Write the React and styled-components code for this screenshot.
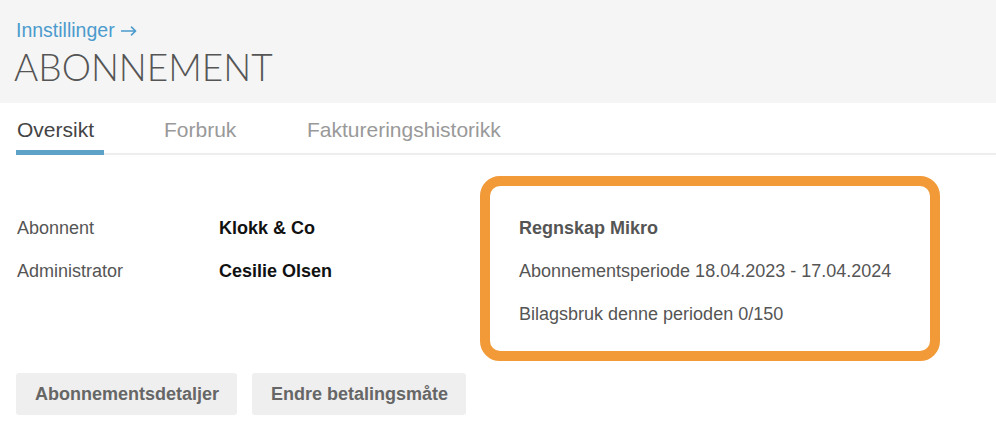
import React from "react";
import styled, { createGlobalStyle } from "styled-components";

const Global = createGlobalStyle`
  html, body { margin: 0; padding: 0; background: #fff; }
  body { font-family: "Liberation Sans", Arial, sans-serif; }
`;

const Page = styled.div`
  width: 996px;
  height: 434px;
  overflow: hidden;
  background: #fff;
`;

const Header = styled.header`
  background: #f5f5f5;
  height: 103px;
  padding: 19px 0 0 16px;
  box-sizing: border-box;
`;

const Crumb = styled.a`
  display: flex;
  align-items: center;
  gap: 6px;
  color: #4b9bcd;
  font-size: 19.5px;
  line-height: 22px;
  text-decoration: none;
`;

const Arrow = styled.svg`
  width: 16px;
  height: 10px;
  margin-top: 1px;
`;

const Title = styled.h1`
  margin: 4px 0 0 -2px;
  font-family: Lato, "Liberation Sans", sans-serif;
  font-weight: 300;
  font-size: 37px;
  line-height: 44px;
  letter-spacing: 0;
  color: #555;
`;

const Tabs = styled.nav`
  display: flex;
  margin: 15px 0 0 16px;
  border-bottom: 2px solid #eeeeee;
  gap: 60px;
`;

const Tab = styled.div`
  font-size: 21px;
  line-height: 24px;
  padding: 0 0 8px ${p => (p.$first ? "1px" : "0")};
  width: ${p => p.$w}px;
  box-sizing: border-box;
  color: ${p => (p.$active ? "#444" : "#999")};
  border-bottom: 5px solid ${p => (p.$active ? "#5ca3c7" : "transparent")};
  margin-bottom: -2px;
`;

const Body = styled.section`
  display: flex;
  padding: 21px 0 0 16px;
`;

const InfoGrid = styled.div`
  display: grid;
  grid-template-columns: 203px auto;
  row-gap: 22px;
  align-content: start;
  padding-top: 42px;
  width: 464px;
`;

const Label = styled.span`
  font-size: 18px;
  line-height: 21px;
  color: #555;
  padding-left: 1px;
`;

const Value = styled.span`
  font-size: 18px;
  line-height: 21px;
  font-weight: 700;
  color: #111;
`;

const Card = styled.div`
  width: 460px;
  height: 185px;
  box-sizing: border-box;
  border: 10px solid #f29a38;
  border-radius: 20px;
  padding: 32px 0 0 29px;
  display: flex;
  flex-direction: column;
  gap: 22px;
`;

const CardLine = styled.div`
  font-size: 18px;
  line-height: 21px;
  color: #555;
  font-weight: ${p => (p.$bold ? 700 : 400)};
`;

const Actions = styled.div`
  display: flex;
  gap: 15px;
  padding: 12px 0 0 16px;
`;

const Button = styled.button`
  height: 42px;
  padding: 0 18px 0 19px;
  border: none;
  border-radius: 3px;
  background: #efefef;
  font-family: "Liberation Sans", Arial, sans-serif;
  font-size: 18px;
  font-weight: 700;
  color: #666;
`;

export default function App() {
  return (
    <Page>
      <Global />
      <Header>
        <Crumb href="#">
          Innstillinger
          <Arrow viewBox="0 0 16 10" aria-hidden="true">
            <path d="M0.5 5H14.5M10.5 1.2L14.6 5L10.5 8.8" fill="none" stroke="#4b9bcd" strokeWidth="1.6" strokeLinecap="round" strokeLinejoin="round" />
          </Arrow>
        </Crumb>
        <Title>ABONNEMENT</Title>
      </Header>
      <Tabs>
        <Tab $active $first $w={88}>Oversikt</Tab>
        <Tab $w={83}>Forbruk</Tab>
        <Tab $w={200}>Faktureringshistorikk</Tab>
      </Tabs>
      <Body>
        <InfoGrid>
          <Label>Abonnent</Label>
          <Value>Klokk &amp; Co</Value>
          <Label>Administrator</Label>
          <Value>Cesilie Olsen</Value>
        </InfoGrid>
        <Card>
          <CardLine $bold>Regnskap Mikro</CardLine>
          <CardLine>Abonnementsperiode 18.04.2023 - 17.04.2024</CardLine>
          <CardLine>Bilagsbruk denne perioden 0/150</CardLine>
        </Card>
      </Body>
      <Actions>
        <Button>Abonnementsdetaljer</Button>
        <Button>Endre betalingsmåte</Button>
      </Actions>
    </Page>
  );
}
